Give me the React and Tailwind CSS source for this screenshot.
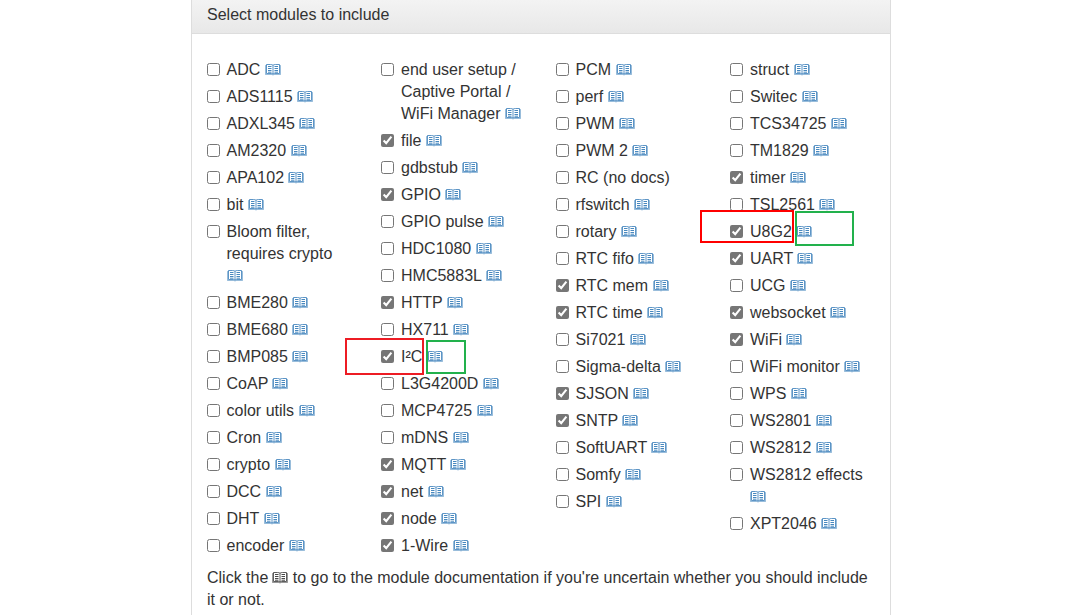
import React from 'react';

// A leading "*" marks a module that is selected by default.
const columns = [
  ['ADC', 'ADS1115', 'ADXL345', 'AM2320', 'APA102', 'bit', 'Bloom filter, requires crypto', 'BME280', 'BME680', 'BMP085', 'CoAP', 'color utils', 'Cron', 'crypto', 'DCC', 'DHT', 'encoder'],
  ['end user setup / Captive Portal / WiFi Manager', '*file', 'gdbstub', '*GPIO', 'GPIO pulse', 'HDC1080', 'HMC5883L', '*HTTP', 'HX711', '*I²C', 'L3G4200D', 'MCP4725', 'mDNS', '*MQTT', '*net', '*node', '*1-Wire'],
  ['PCM', 'perf', 'PWM', 'PWM 2', 'RC (no docs)', 'rfswitch', 'rotary', 'RTC fifo', '*RTC mem', '*RTC time', 'Si7021', 'Sigma-delta', '*SJSON', '*SNTP', 'SoftUART', 'Somfy', 'SPI'],
  ['struct', 'Switec', 'TCS34725', 'TM1829', '*timer', 'TSL2561', '*U8G2', '*UART', 'UCG', '*websocket', '*WiFi', 'WiFi monitor', 'WPS', 'WS2801', 'WS2812', 'WS2812 effects', 'XPT2046'],
];

function Book({ className }) {
  return (
    <svg viewBox="0 0 16 12" width="16" height="12" fill="none" stroke="currentColor" className={`inline-block align-[-1px] ${className}`}>
      <path strokeWidth="0.8" d="M8 1.2Q7 .5 5.5 .5H1.5V9.5H6.5Q7.5 9.5 8 10.3Q8.5 9.5 9.5 9.5H14.5V.5H10.5Q9 .5 8 1.2V10.3" />
      <path strokeWidth="0.5" d="M1.5 1.5H.5V10.5H7L8 11L9 10.5H15.5V1.5H14.5" />
      <path strokeWidth="0.9" d="M3 2.5H6.5M3 4.5H6.5M3 6.5H6.5M3 8.2H6.5M9.5 2.5H13M9.5 4.5H13M9.5 6.5H13M9.5 8.2H13" />
    </svg>
  );
}

function Module({ entry }) {
  const checked = entry.startsWith('*');
  const name = checked ? entry.slice(1) : entry;
  return (
    <label className="flex items-start gap-[6.7px]">
      <input type="checkbox" defaultChecked={checked} className="-ml-[0.2px] mt-1 h-[13px] w-[13px] shrink-0 accent-[#767676]" />
      <span className="relative min-w-0">
        {name}
        {name !== 'RC (no docs)' && <> <Book className="text-[#337ab7]" /></>}
        {name === 'I²C' && (
          <>
            <i className="absolute top-[-8px] left-[-56px] h-[37px] w-[79px] border-2 border-[#ed1c24]" />
            <i className="absolute top-[-6px] left-[25px] h-[34px] w-[40px] border-2 border-[#22b14c]" />
          </>
        )}
        {name === 'U8G2' && (
          <>
            <i className="absolute top-[-11px] left-[-50px] h-[33px] w-[94px] border-2 border-[#ff0000]" />
            <i className="absolute top-[-10px] left-[45px] h-[35px] w-[59px] border-2 border-[#22b14c]" />
          </>
        )}
      </span>
    </label>
  );
}

export default function App() {
  return (
    <main className="h-[615px] overflow-hidden bg-white font-['Liberation_Sans',Arial,sans-serif] text-base leading-[22px] text-[#333]">
      <section className="ml-[191px] flex h-[640px] w-[700px] flex-col border-x border-[#ddd]">
        <h2 className="h-[34px] shrink-0 border-b border-[#ddd] bg-linear-to-b from-[#f3f3f3] to-[#e8e8e8] px-[15px] pt-1">Select modules to include</h2>
        <div className="grid grid-cols-4 pt-[25px]">
          {columns.map((items) => (
            <div key={items[0]} className="flex flex-col gap-[5px] px-[15px]">
              {items.map((entry) => <Module key={entry} entry={entry} />)}
            </div>
          ))}
        </div>
        <p className="px-[15px] pt-2.5">
          Click the <Book className="-ml-[0.5px] text-[#333]" /> to go to the module documentation if you're uncertain whether you should include it or not.
        </p>
      </section>
    </main>
  );
}
